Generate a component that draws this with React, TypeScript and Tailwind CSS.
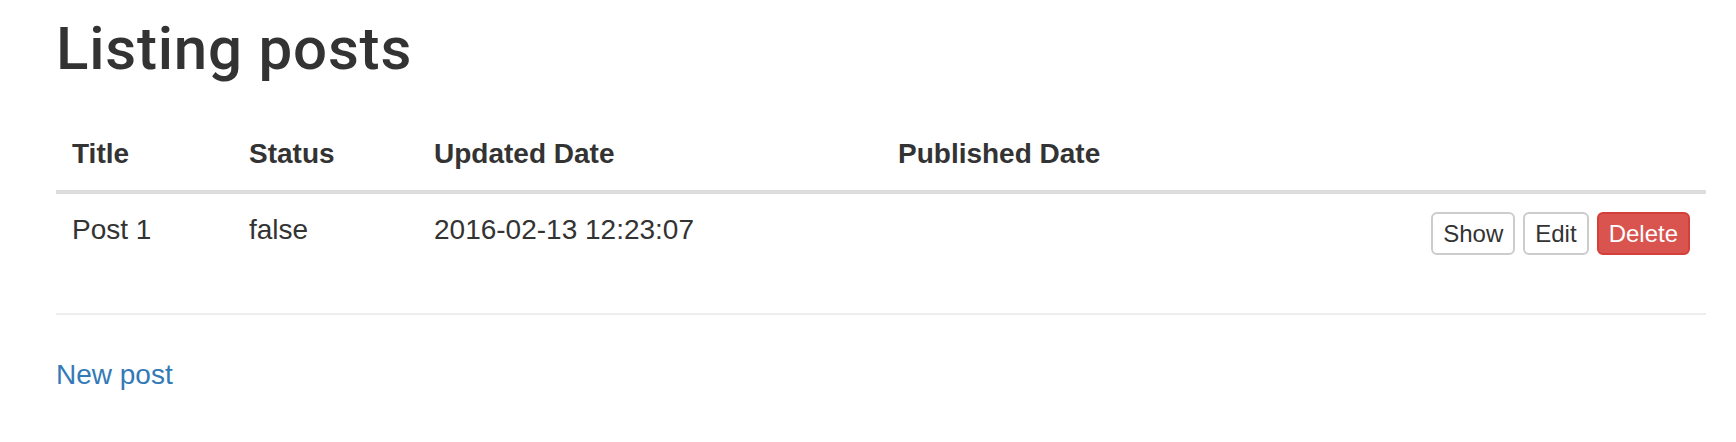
const posts = [
  { title: "Post 1", status: "false", updated: "2016-02-13 12:23:07", published: "" },
];

export default function App() {
  return (
    <div className="min-h-[442px] bg-white pl-[56px] pr-[30px] font-['Liberation_Sans',Arial,sans-serif] text-[#333]">
      <h1 className="pt-[16px] font-['Roboto',Arial,sans-serif] text-[60px] leading-[66px] font-medium tracking-[0.8px]">
        Listing posts
      </h1>

      <table className="mt-[36px] mb-[42px] w-full table-fixed border-collapse text-[28px] leading-[40px]">
        <colgroup>
          <col className="w-[177px]" />
          <col className="w-[185px]" />
          <col className="w-[464px]" />
          <col />
          <col className="w-[290px]" />
        </colgroup>
        <thead>
          <tr className="border-b-4 border-[#ddd]">
            <th className="px-4 pt-4 pb-4 text-left font-bold">Title</th>
            <th className="px-4 pt-4 pb-4 text-left font-bold">Status</th>
            <th className="px-4 pt-4 pb-4 text-left font-bold">Updated Date</th>
            <th className="px-4 pt-4 pb-4 text-left font-bold">Published Date</th>
            <th className="px-4 pt-4 pb-4" />
          </tr>
        </thead>
        <tbody>
          {posts.map((post) => (
            <tr key={post.title}>
              <td className="px-4 pt-4 pb-4 align-top">{post.title}</td>
              <td className="px-4 pt-4 pb-4 align-top">{post.status}</td>
              <td className="px-4 pt-4 pb-4 align-top">{post.updated}</td>
              <td className="px-4 pt-4 pb-4 align-top">{post.published}</td>
              <td className="px-4 pt-4 pb-4 align-top">
                <div className="flex justify-end gap-2 pt-[2px]">
                  <button className="rounded-[6px] border-2 border-[#ccc] bg-white px-[10px] py-[2px] text-[24px] leading-[35px] text-[#333]">
                    Show
                  </button>
                  <button className="rounded-[6px] border-2 border-[#ccc] bg-white px-[10px] py-[2px] text-[24px] leading-[35px] text-[#333]">
                    Edit
                  </button>
                  <button className="rounded-[6px] border-2 border-[#d43f3a] bg-[#d9534f] px-[10px] py-[2px] text-[24px] leading-[35px] text-white">
                    Delete
                  </button>
                </div>
              </td>
            </tr>
          ))}
        </tbody>
      </table>

      <hr className="border-t-2 border-[#eee]" />

      <a href="#" className="mt-[40px] block text-[28px] leading-[40px] text-[#337ab7]">
        New post
      </a>
    </div>
  );
}
